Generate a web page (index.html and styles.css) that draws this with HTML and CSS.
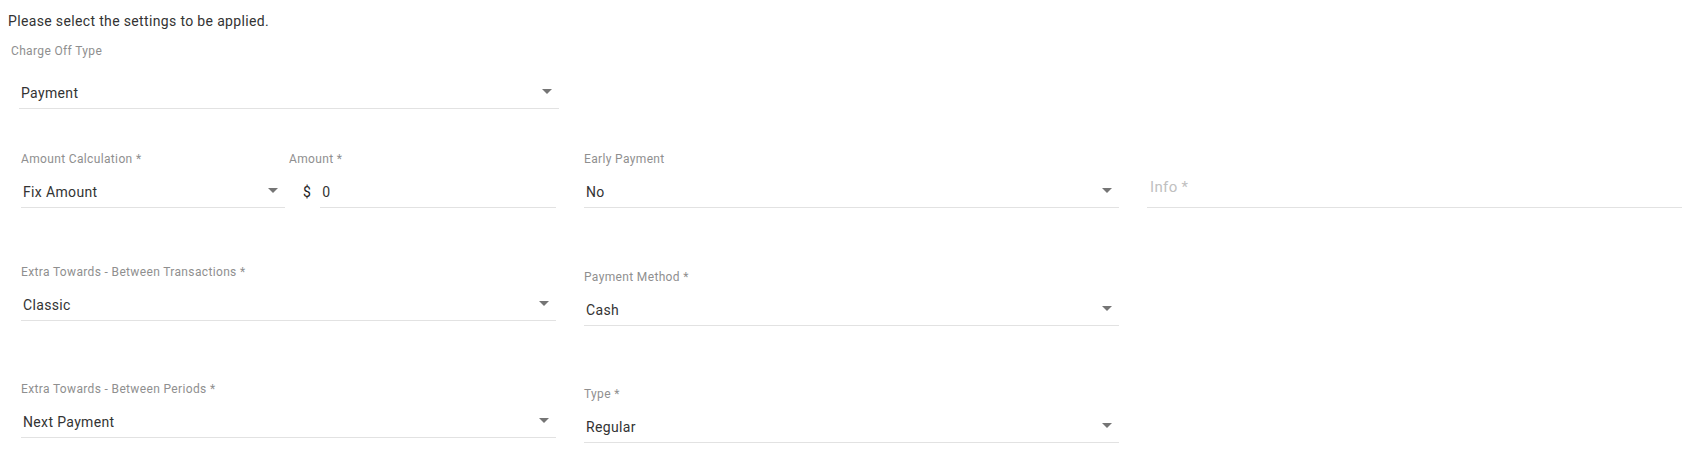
FILE: index.html
```html
<!DOCTYPE html>
<html>
<head>
	<meta charset="UTF-8">
	<title>Charge Off Settings</title>
	<link rel="stylesheet" href="styles.css">
</head>

<body>
<div class="intro">Please select the settings to be applied.</div>

<div class="top-field">
	<div class="label">Charge Off Type</div>
	<div class="control">
		<span class="value">Payment</span>
		<svg class="arrow" viewBox="0 0 24 24"><path d="M7 10l5 5 5-5z"/></svg>
	</div>
</div>

<div class="grid">
	<div class="split">
		<div class="field calc">
			<div class="label">Amount Calculation *</div>
			<div class="control">
				<span class="value">Fix Amount</span>
				<svg class="arrow" viewBox="0 0 24 24"><path d="M7 10l5 5 5-5z"/></svg>
			</div>
		</div>
		<div class="field amount">
			<div class="label">Amount *</div>
			<div class="amount-row">
				<span class="prefix">$</span>
				<div class="control">
					<span class="value">0</span>
				</div>
			</div>
		</div>
	</div>

	<div class="field">
		<div class="label">Early Payment</div>
		<div class="control">
			<span class="value">No</span>
			<svg class="arrow" viewBox="0 0 24 24"><path d="M7 10l5 5 5-5z"/></svg>
		</div>
	</div>

	<div class="field">
		<div class="label"></div>
		<div class="control">
			<span class="placeholder">Info *</span>
		</div>
	</div>

	<div class="field">
		<div class="label">Extra Towards - Between Transactions *</div>
		<div class="control">
			<span class="value">Classic</span>
			<svg class="arrow" viewBox="0 0 24 24"><path d="M7 10l5 5 5-5z"/></svg>
		</div>
	</div>

	<div class="field lower">
		<div class="label">Payment Method *</div>
		<div class="control">
			<span class="value">Cash</span>
			<svg class="arrow" viewBox="0 0 24 24"><path d="M7 10l5 5 5-5z"/></svg>
		</div>
	</div>

	<div></div>

	<div class="field">
		<div class="label">Extra Towards - Between Periods *</div>
		<div class="control">
			<span class="value">Next Payment</span>
			<svg class="arrow" viewBox="0 0 24 24"><path d="M7 10l5 5 5-5z"/></svg>
		</div>
	</div>

	<div class="field lower">
		<div class="label">Type *</div>
		<div class="control">
			<span class="value">Regular</span>
			<svg class="arrow" viewBox="0 0 24 24"><path d="M7 10l5 5 5-5z"/></svg>
		</div>
	</div>
</div>
</body>
</html>
```

FILE: styles.css
```css
body {
	margin: 0;
	font-family: Roboto, "Liberation Sans", sans-serif;
	letter-spacing: 0.35px;
	color: #333;
	background-color: #fff;
}
.intro {
	padding: 11px 0 0 8px;
	font-size: 14px;
	line-height: 20px;
	color: #333;
}
.top-field {
	padding: 13px 0 0 19px;
	width: 540px;
}
.top-field .label {
	margin-left: -8px;
	margin-bottom: 20px;
}
.label {
	height: 14px;
	font-size: 12px;
	line-height: 14px;
	color: #8f8f8f;
	white-space: nowrap;
}
.field .label {
	margin-bottom: 11px;
}
.control {
	display: flex;
	flex: 1;
	align-items: flex-start;
	height: 30px;
	border-bottom: 1px solid #e2e2e2;
}
.value {
	flex: 1;
	padding-left: 2px;
	font-size: 14px;
	line-height: 30px;
	color: #333;
}
.arrow {
	width: 24px;
	height: 24px;
	margin-top: 1px;
	fill: rgba(0, 0, 0, 0.54);
}
.placeholder {
	padding-left: 3px;
	font-size: 15px;
	line-height: 20px;
	color: #c0c0c0;
}
.grid {
	display: grid;
	grid-template-columns: repeat(3, 1fr);
	column-gap: 28px;
	row-gap: 56.5px;
	align-items: start;
	padding: 43px 21px 0;
}
.split {
	display: flex;
	gap: 4px;
}
.calc {
	width: 264px;
}
.amount {
	flex: 1;
}
.amount-row {
	display: flex;
}
.prefix {
	padding-left: 14px;
	margin-right: 9px;
	font-size: 14px;
	line-height: 30px;
	color: #222;
}
.lower {
	margin-top: 5px;
}
```
